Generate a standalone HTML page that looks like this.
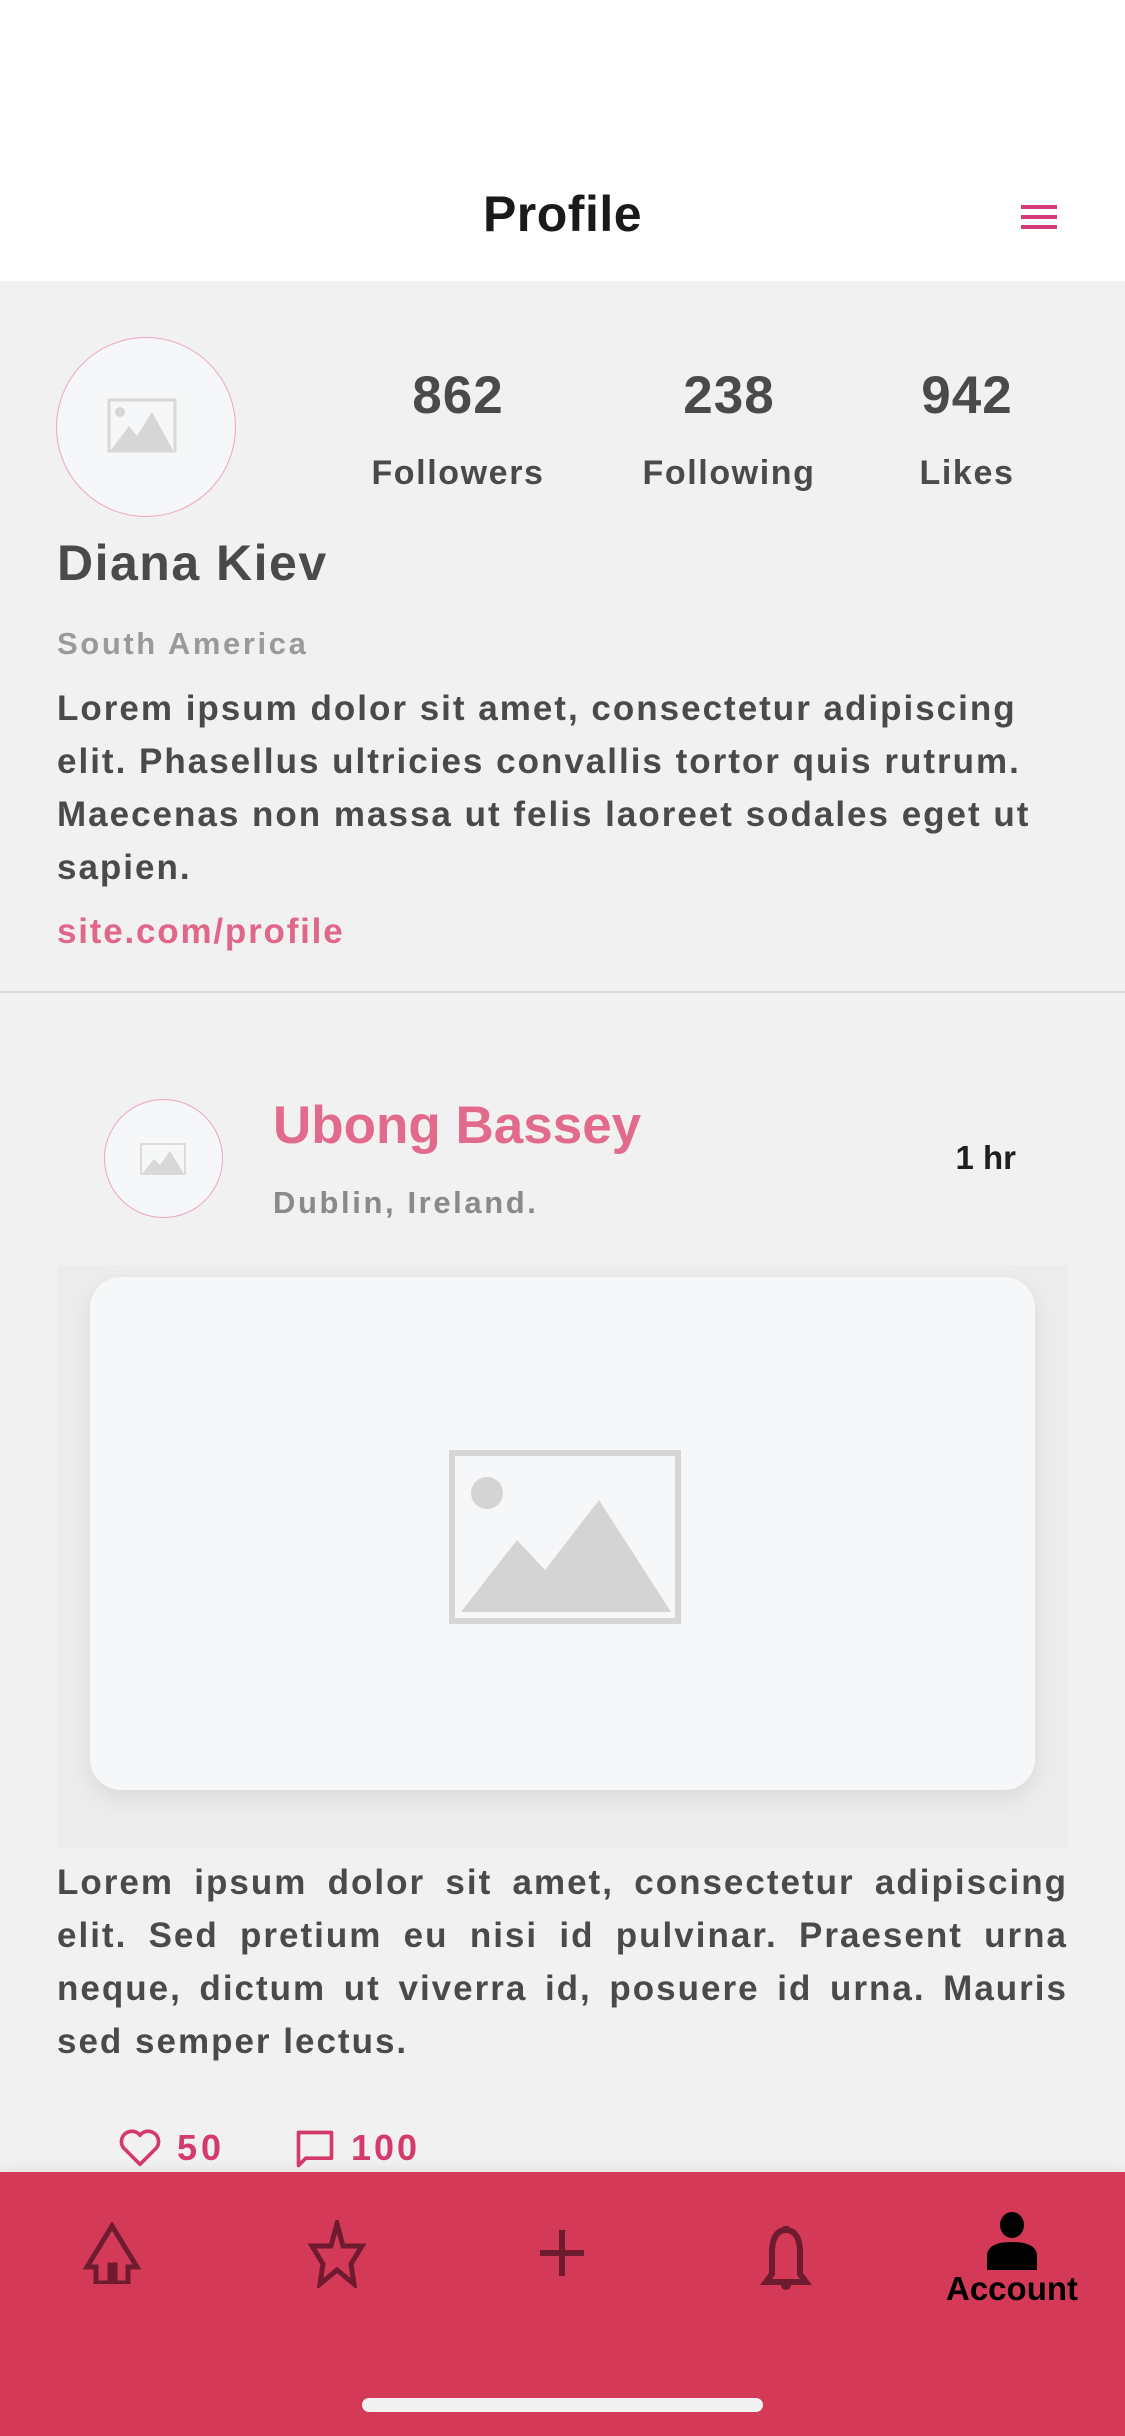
<!DOCTYPE html>
<html><head><meta charset="utf-8"><style>
*{margin:0;padding:0;box-sizing:border-box}
body{width:1125px;height:2436px;background:#f1f1f1;font-family:"Liberation Sans",sans-serif;position:relative;overflow:hidden;color:#4a4a4a}
.a{position:absolute}
.hdr{left:0;top:0;width:1125px;height:281px;background:#fff}
.t{white-space:nowrap}
.stat{width:260px;text-align:center;font-weight:bold}
.bio{left:57px;width:1011px;font-size:35px;line-height:53px;font-weight:bold;color:#4a4a4a;letter-spacing:2px}
</style></head><body>
<div class="a hdr"></div>
<div class="a t" style="left:0;width:1125px;text-align:center;top:185px;font-size:50px;font-weight:bold;color:#1a1a1a;letter-spacing:0.5px">Profile</div>
<div class="a" style="left:1021px;top:205px;width:36px;height:4px;background:#d43a78"></div>
<div class="a" style="left:1021px;top:215px;width:36px;height:4px;background:#d43a78"></div>
<div class="a" style="left:1021px;top:225px;width:36px;height:4px;background:#d43a78"></div>

<div class="a" style="left:56px;top:337px;width:180px;height:180px;border-radius:50%;background:#f6f7f9;border:1.5px solid #eaa6c4"></div>
<svg class="a" style="left:107px;top:398px" width="70" height="55" viewBox="0 0 70 55"><rect x="2" y="2" width="66" height="51" fill="none" stroke="#d8d8d8" stroke-width="3"/><path d="M4 52 L22 28 L30 38 L45 14 L66 52Z" fill="#d6d6d6"/><circle cx="13" cy="14" r="5" fill="#d6d6d6"/></svg>

<div class="a stat" style="left:328px;top:365px;font-size:53px;letter-spacing:1px">862</div>
<div class="a stat" style="left:599px;top:365px;font-size:53px;letter-spacing:1px">238</div>
<div class="a stat" style="left:837px;top:365px;font-size:53px;letter-spacing:1px">942</div>
<div class="a stat" style="left:328px;top:454px;font-size:34px;letter-spacing:1.6px">Followers</div>
<div class="a stat" style="left:599px;top:454px;font-size:34px;letter-spacing:1.6px">Following</div>
<div class="a stat" style="left:837px;top:454px;font-size:34px;letter-spacing:1.6px">Likes</div>

<div class="a t" style="left:57px;top:534px;font-size:50px;font-weight:bold;letter-spacing:1.5px">Diana Kiev</div>
<div class="a t" style="left:57px;top:626px;font-size:31px;font-weight:bold;color:#9a9a9a;letter-spacing:2.6px">South America</div>
<div class="a bio" style="top:682px">Lorem ipsum dolor sit amet, consectetur adipiscing elit. Phasellus ultricies convallis tortor quis rutrum. Maecenas non massa ut felis laoreet sodales eget ut sapien.</div>
<div class="a t" style="left:57px;top:912px;font-size:35px;font-weight:bold;color:#e0668a;letter-spacing:1.8px">site.com/profile</div>
<div class="a" style="left:0;top:991px;width:1125px;height:2px;background:#dcdcdc"></div>

<div class="a" style="left:104px;top:1099px;width:119px;height:119px;border-radius:50%;background:#f6f7f9;border:1.5px solid #eaa6c4"></div>
<svg class="a" style="left:140px;top:1143px" width="46" height="32" viewBox="0 0 46 32"><rect x="1" y="1" width="44" height="30" fill="none" stroke="#dcdcdc" stroke-width="2"/><path d="M2 31 L14 16 L20 22 L30 8 L44 31Z" fill="#d8d8d8"/></svg>
<div class="a t" style="left:273px;top:1095px;font-size:53px;font-weight:bold;color:#e26a8c">Ubong Bassey</div>
<div class="a t" style="left:273px;top:1185px;font-size:31px;font-weight:bold;color:#8a8a8a;letter-spacing:2.6px">Dublin, Ireland.</div>
<div class="a t" style="left:900px;width:116px;text-align:right;top:1139px;font-size:33px;font-weight:bold;color:#1f1f1f">1 hr</div>

<div class="a" style="left:57px;top:1265px;width:1011px;height:583px;background:#ececec"></div>
<div class="a" style="left:90px;top:1277px;width:945px;height:513px;background:#f6f7f9;border-radius:31px;box-shadow:0 8px 20px rgba(0,0,0,0.08)"></div>
<svg class="a" style="left:449px;top:1450px" width="232" height="174" viewBox="0 0 232 174"><rect x="3" y="3" width="226" height="168" fill="none" stroke="#d6d6d6" stroke-width="6"/><path d="M12 162 L68 90 L96 120 L150 50 L222 162Z" fill="#d4d4d4"/><circle cx="38" cy="43" r="16" fill="#d4d4d4"/></svg>

<div class="a bio" style="top:1856px;text-align:justify">Lorem ipsum dolor sit amet, consectetur adipiscing elit. Sed pretium eu nisi id pulvinar. Praesent urna neque, dictum ut viverra id, posuere id urna. Mauris sed semper lectus.</div>

<svg class="a" style="left:118px;top:2128px" width="44" height="40" viewBox="0 0 24 22"><path d="M12 20 L3 11 A5 5 0 0 1 12 4 A5 5 0 0 1 21 11Z" fill="none" stroke="#d43a6a" stroke-width="2" stroke-linejoin="round"/></svg>
<div class="a t" style="left:177px;top:2127px;font-size:36px;font-weight:bold;color:#d43a6a;letter-spacing:4px">50</div>
<svg class="a" style="left:293px;top:2127px" width="44" height="44" viewBox="0 0 24 24"><path d="M3 3 H21 V17 H7 L3 21Z" fill="none" stroke="#d43a6a" stroke-width="2" stroke-linejoin="round"/></svg>
<div class="a t" style="left:351px;top:2127px;font-size:36px;font-weight:bold;color:#d43a6a;letter-spacing:3px">100</div>

<div class="a" style="left:0;top:2172px;width:1125px;height:264px;background:#d43a58;box-shadow:0 -4px 10px rgba(0,0,0,0.06)"></div>
<svg class="a" style="left:82px;top:2222px" width="60" height="62" viewBox="0 0 60 62"><path d="M30 4 L5 45 H14 V61 H28 V43 H33 V61 H46 V45 H55Z" fill="none" stroke="#6e1a2f" stroke-width="5" stroke-linejoin="miter"/></svg>
<svg class="a" style="left:306px;top:2220px" width="62" height="68" viewBox="0 0 62 68"><path d="M31 4 L37 26 L56 26 L45 44 L48 64 L31 50 L14 64 L17 44 L6 26 L25 26Z" fill="none" stroke="#6e1a2f" stroke-width="5"/></svg>
<div class="a" style="left:540px;top:2250px;width:44px;height:6px;background:#6e1a2f"></div>
<div class="a" style="left:559px;top:2230px;width:6px;height:46px;background:#6e1a2f"></div>
<svg class="a" style="left:758px;top:2222px" width="56" height="70" viewBox="0 0 56 70"><path d="M28 4 V8 C18 8 14 18 14 30 V52 L8 60 H48 L42 52 V30 C42 18 38 8 28 8" fill="none" stroke="#6e1a2f" stroke-width="6"/><path d="M23 63 H33 A5 5 0 0 1 23 63Z" fill="#6e1a2f"/></svg>
<svg class="a" style="left:985px;top:2212px" width="54" height="58" viewBox="0 0 54 58"><ellipse cx="27" cy="13" rx="12" ry="13" fill="#000"/><path d="M2 58 V44 C2 34 12 30 27 30 C42 30 52 34 52 44 V58Z" fill="#000"/></svg>
<div class="a t" style="left:912px;width:200px;text-align:center;top:2270px;font-size:33px;font-weight:bold;color:#000">Account</div>
<div class="a" style="left:362px;top:2398px;width:401px;height:14px;border-radius:7px;background:#f1f1f1"></div>
</body></html>
